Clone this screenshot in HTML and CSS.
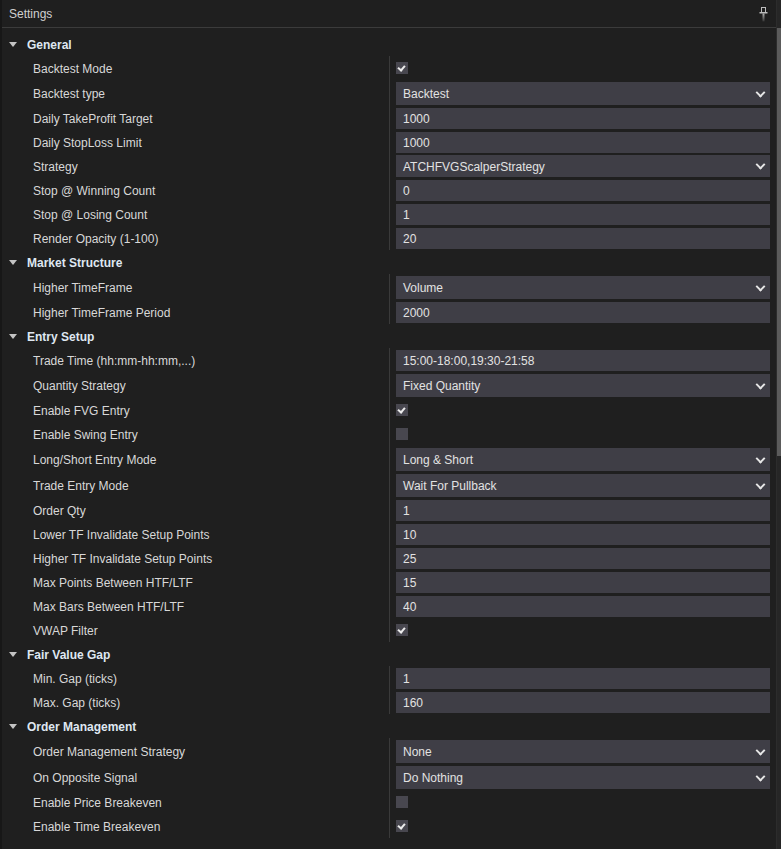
FILE: index.html
```html
<!DOCTYPE html>
<html>
<head>
<meta charset="utf-8">
<link rel="stylesheet" href="styles.css">
</head>
<body>
<div class="window">
  <div class="main">
    <div class="titlebar">
      <span class="title">Settings</span>
      <svg class="pin" width="9" height="15" viewBox="0 0 9 15">
        <defs><linearGradient id="g" x1="0" y1="0" x2="0" y2="1"><stop offset="0" stop-color="#b0b0b0"/><stop offset="1" stop-color="#333333"/></linearGradient></defs>
        <rect x="2.5" y="0.5" width="4" height="5" fill="none" stroke="#bdbdbd" stroke-width="1"/>
        <rect x="0.5" y="5" width="8" height="1.5" fill="#bdbdbd"/>
        <rect x="3.5" y="6.5" width="2" height="8" fill="url(#g)"/>
      </svg>
    </div>
    <div class="content">

      <div class="group">
        <div class="group-head"><span class="caret"></span><span class="gtext">General</span></div>
        <div class="rows">
          <div class="row"><div class="label">Backtest Mode</div><div class="value"><span class="check on"></span></div></div>
          <div class="row tall"><div class="label">Backtest type</div><div class="value"><div class="select">Backtest</div></div></div>
          <div class="row"><div class="label">Daily TakeProfit Target</div><div class="value"><div class="input">1000</div></div></div>
          <div class="row"><div class="label">Daily StopLoss Limit</div><div class="value"><div class="input">1000</div></div></div>
          <div class="row"><div class="label">Strategy</div><div class="value"><div class="select short">ATCHFVGScalperStrategy</div></div></div>
          <div class="row"><div class="label">Stop @ Winning Count</div><div class="value"><div class="input">0</div></div></div>
          <div class="row"><div class="label">Stop @ Losing Count</div><div class="value"><div class="input">1</div></div></div>
          <div class="row"><div class="label">Render Opacity (1-100)</div><div class="value"><div class="input">20</div></div></div>
        </div>
      </div>

      <div class="group">
        <div class="group-head"><span class="caret"></span><span class="gtext">Market Structure</span></div>
        <div class="rows">
          <div class="row tall"><div class="label">Higher TimeFrame</div><div class="value"><div class="select">Volume</div></div></div>
          <div class="row"><div class="label">Higher TimeFrame Period</div><div class="value"><div class="input">2000</div></div></div>
        </div>
      </div>

      <div class="group">
        <div class="group-head"><span class="caret"></span><span class="gtext">Entry Setup</span></div>
        <div class="rows">
          <div class="row"><div class="label">Trade Time (hh:mm-hh:mm,...)</div><div class="value"><div class="input">15:00-18:00,19:30-21:58</div></div></div>
          <div class="row tall"><div class="label">Quantity Strategy</div><div class="value"><div class="select">Fixed Quantity</div></div></div>
          <div class="row"><div class="label">Enable FVG Entry</div><div class="value"><span class="check on"></span></div></div>
          <div class="row"><div class="label">Enable Swing Entry</div><div class="value"><span class="check"></span></div></div>
          <div class="row tall"><div class="label">Long/Short Entry Mode</div><div class="value"><div class="select">Long &amp; Short</div></div></div>
          <div class="row tall"><div class="label">Trade Entry Mode</div><div class="value"><div class="select">Wait For Pullback</div></div></div>
          <div class="row"><div class="label">Order Qty</div><div class="value"><div class="input">1</div></div></div>
          <div class="row"><div class="label">Lower TF Invalidate Setup Points</div><div class="value"><div class="input">10</div></div></div>
          <div class="row"><div class="label">Higher TF Invalidate Setup Points</div><div class="value"><div class="input">25</div></div></div>
          <div class="row"><div class="label">Max Points Between HTF/LTF</div><div class="value"><div class="input">15</div></div></div>
          <div class="row"><div class="label">Max Bars Between HTF/LTF</div><div class="value"><div class="input">40</div></div></div>
          <div class="row"><div class="label">VWAP Filter</div><div class="value"><span class="check on"></span></div></div>
        </div>
      </div>

      <div class="group">
        <div class="group-head"><span class="caret"></span><span class="gtext">Fair Value Gap</span></div>
        <div class="rows">
          <div class="row"><div class="label">Min. Gap (ticks)</div><div class="value"><div class="input">1</div></div></div>
          <div class="row"><div class="label">Max. Gap (ticks)</div><div class="value"><div class="input">160</div></div></div>
        </div>
      </div>

      <div class="group">
        <div class="group-head"><span class="caret"></span><span class="gtext">Order Management</span></div>
        <div class="rows">
          <div class="row tall"><div class="label">Order Management Strategy</div><div class="value"><div class="select">None</div></div></div>
          <div class="row tall"><div class="label">On Opposite Signal</div><div class="value"><div class="select">Do Nothing</div></div></div>
          <div class="row"><div class="label">Enable Price Breakeven</div><div class="value"><span class="check"></span></div></div>
          <div class="row"><div class="label">Enable Time Breakeven</div><div class="value"><span class="check on"></span></div></div>
        </div>
      </div>

    </div>
  </div>
  <div class="scrollbar"><div class="thumb"></div></div>
</div>
</body>
</html>
```
FILE: styles.css
```css
html, body {
  margin: 0;
  padding: 0;
  background: #1f1f1f;
}
body {
  font-family: "Liberation Sans", Arial, sans-serif;
  font-size: 12px;
  color: #dadada;
}
.window {
  display: flex;
  width: 781px;
  height: 849px;
  overflow: hidden;
  background: #1f1f1f;
  box-sizing: border-box;
  border-left: 2px solid #171717;
}
.main {
  flex: 1;
  display: flex;
  flex-direction: column;
  min-width: 0;
}
.titlebar {
  height: 27px;
  border-bottom: 1px solid #3b3b3b;
  display: flex;
  align-items: center;
  justify-content: space-between;
  padding: 0 8px 0 7px;
  flex-shrink: 0;
}
.title {
  color: #cfcfcf;
  font-size: 12px;
  padding-top: 1px;
}
.pin {
  display: block;
  margin-top: 1px;
}
.content {
  padding-top: 4px;
}
.group-head {
  height: 24px;
  display: flex;
  align-items: center;
  font-weight: bold;
  color: #dfe7f1;
  padding-left: 7px;
}
.gtext {
  padding-top: 2px;
  padding-left: 1px;
}
.caret {
  width: 0;
  height: 0;
  border-left: 4.5px solid transparent;
  border-right: 4.5px solid transparent;
  border-top: 5px solid #c4c4c4;
  margin-right: 9px;
  margin-top: 1px;
}
.row {
  display: flex;
  height: 24px;
}
.row.tall {
  height: 26px;
}
.label {
  width: 356px;
  padding-left: 31px;
  padding-top: 2px;
  display: flex;
  align-items: center;
  color: #d8d8d8;
  white-space: nowrap;
}
.value {
  flex: 1;
  border-left: 1px solid #3a3a3a;
  padding: 0 6px 0 6px;
  display: flex;
  align-items: center;
}
.row.tall .value {
  align-items: flex-start;
  padding-top: 2px;
}
.input, .select {
  flex: 1;
  height: 21px;
  box-sizing: border-box;
  background: #3f3e46;
  color: #e2e2e2;
  display: flex;
  align-items: center;
  padding-left: 7px;
  padding-top: 1px;
  margin-top: 1px;
  white-space: nowrap;
}
.select {
  height: 23px;
  margin-top: 0;
  position: relative;
}
.select.short {
  height: 22px;
}
.select::after {
  content: "";
  position: absolute;
  right: 6px;
  top: 50%;
  width: 5px;
  height: 5px;
  border-right: 2px solid #e6e6e6;
  border-bottom: 2px solid #e6e6e6;
  transform: translateY(-70%) rotate(45deg);
}
.check {
  width: 12px;
  height: 12px;
  background: #48474f;
  position: relative;
}
.check.on::after {
  content: "";
  position: absolute;
  left: 3px;
  top: 2px;
  width: 3px;
  height: 5px;
  border-right: 2px solid #ececec;
  border-bottom: 2px solid #ececec;
  transform: rotate(40deg);
}
.scrollbar {
  width: 4px;
  border-left: 1px solid #2c2c2c;
  background: #262626;
  padding-top: 28px;
  flex-shrink: 0;
}
.thumb {
  height: 428px;
  background: #5b5b5b;
}
```
